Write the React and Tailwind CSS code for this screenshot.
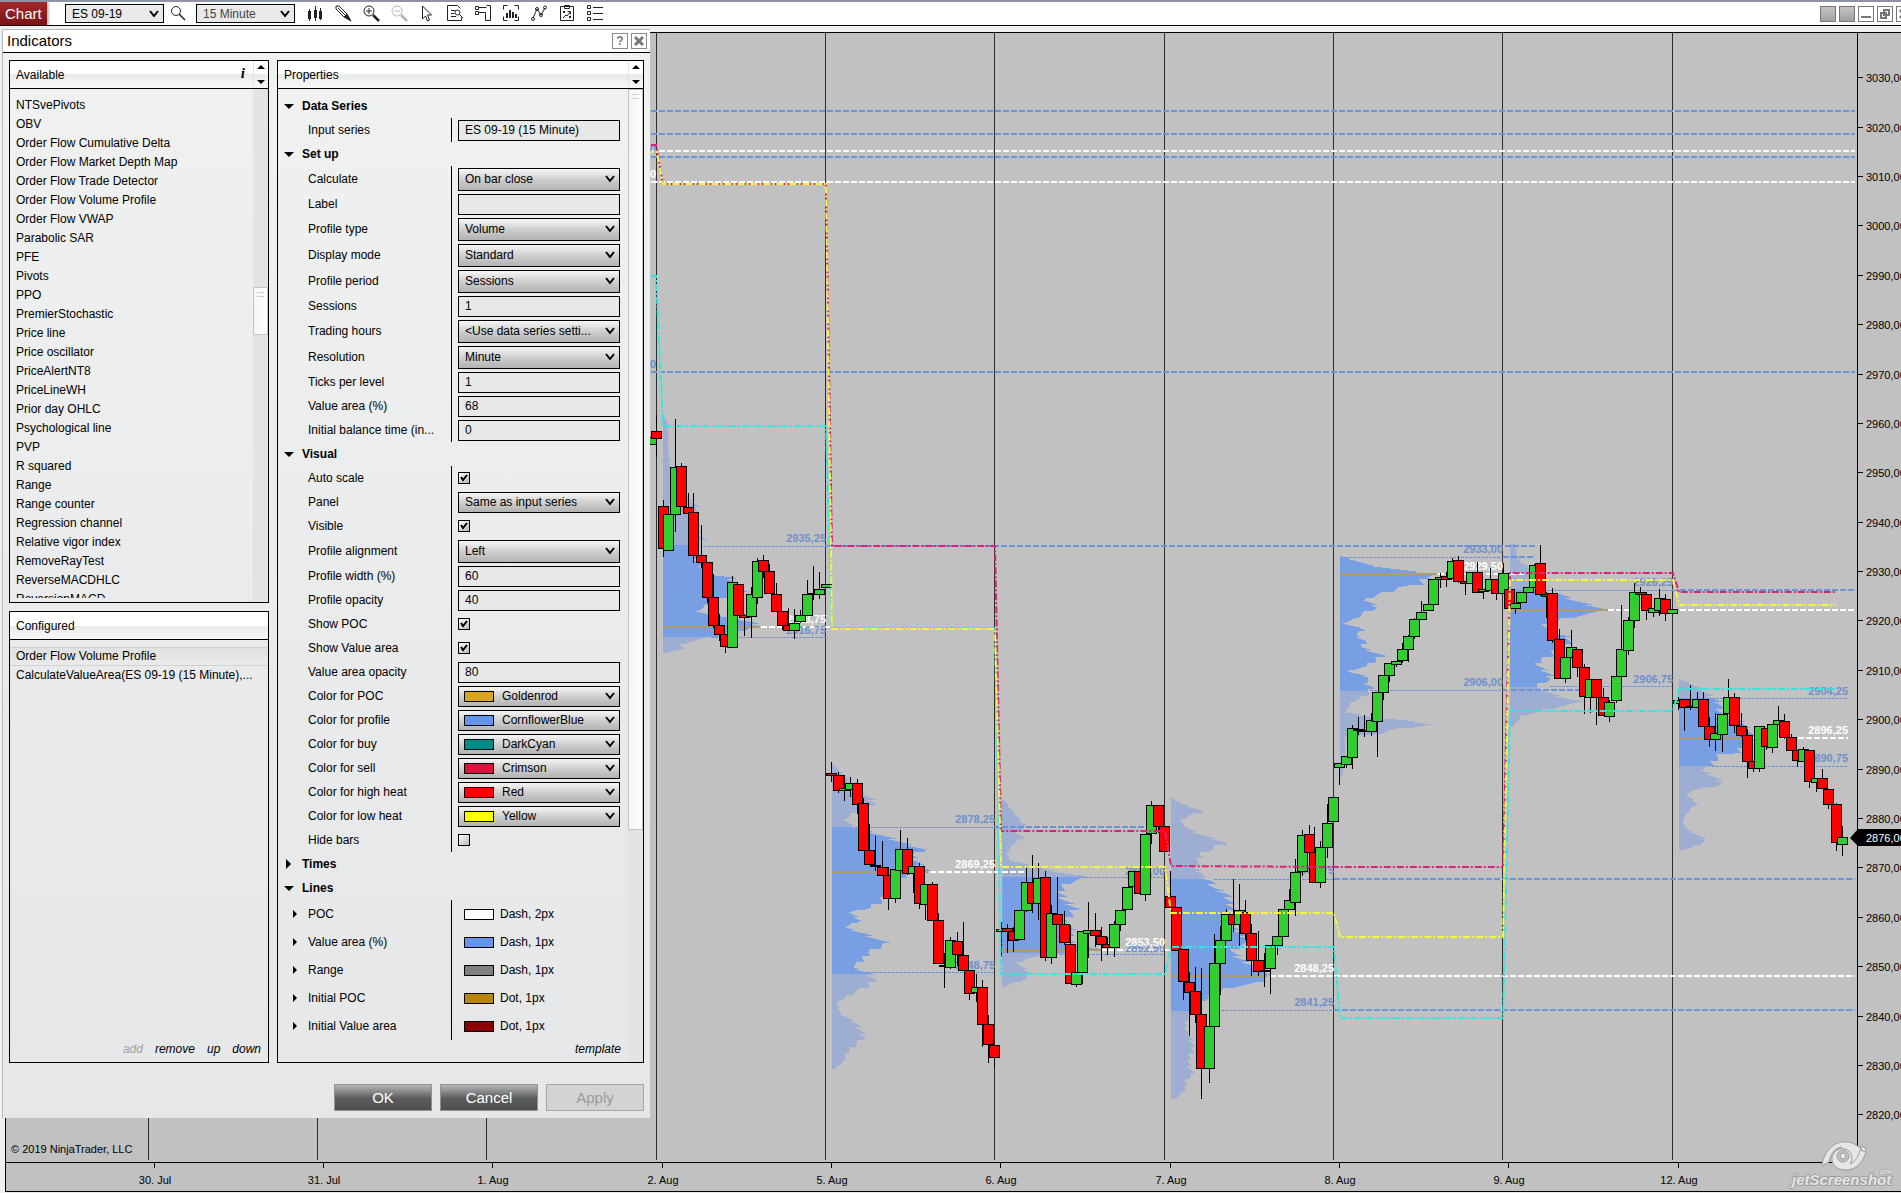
import React from 'react';

const AVAILABLE = [
  'NTSvePivots', 'OBV', 'Order Flow Cumulative Delta', 'Order Flow Market Depth Map',
  'Order Flow Trade Detector', 'Order Flow Volume Profile', 'Order Flow VWAP', 'Parabolic SAR',
  'PFE', 'Pivots', 'PPO', 'PremierStochastic', 'Price line', 'Price oscillator', 'PriceAlertNT8',
  'PriceLineWH', 'Prior day OHLC', 'Psychological line', 'PVP', 'R squared', 'Range',
  'Range counter', 'Regression channel', 'Relative vigor index', 'RemoveRayTest',
  'ReverseMACDHLC', 'ReversionMACD',
];

const GROUPS = [
  {
    title: 'Data Series',
    rows: [{ label: 'Input series', type: 'text', value: 'ES 09-19 (15 Minute)' }],
  },
  {
    title: 'Set up',
    rows: [
      { label: 'Calculate', type: 'select', value: 'On bar close' },
      { label: 'Label', type: 'text', value: '' },
      { label: 'Profile type', type: 'select', value: 'Volume' },
      { label: 'Display mode', type: 'select', value: 'Standard' },
      { label: 'Profile period', type: 'select', value: 'Sessions' },
      { label: 'Sessions', type: 'text', value: '1' },
      { label: 'Trading hours', type: 'select', value: '<Use data series setti...' },
      { label: 'Resolution', type: 'select', value: 'Minute' },
      { label: 'Ticks per level', type: 'text', value: '1' },
      { label: 'Value area (%)', type: 'text', value: '68' },
      { label: 'Initial balance time (in...', type: 'text', value: '0' },
    ],
  },
  {
    title: 'Visual',
    rows: [
      { label: 'Auto scale', type: 'check', value: true },
      { label: 'Panel', type: 'select', value: 'Same as input series', small: true },
      { label: 'Visible', type: 'check', value: true },
      { label: 'Profile alignment', type: 'select', value: 'Left' },
      { label: 'Profile width (%)', type: 'text', value: '60' },
      { label: 'Profile opacity', type: 'text', value: '40' },
      { label: 'Show POC', type: 'check', value: true },
      { label: 'Show Value area', type: 'check', value: true },
      { label: 'Value area opacity', type: 'text', value: '80' },
      { label: 'Color for POC', type: 'select', value: 'Goldenrod', swatch: 'bg-[#daa520]', small: true },
      { label: 'Color for profile', type: 'select', value: 'CornflowerBlue', swatch: 'bg-[#6495ed]', small: true },
      { label: 'Color for buy', type: 'select', value: 'DarkCyan', swatch: 'bg-[#008b8b]', small: true },
      { label: 'Color for sell', type: 'select', value: 'Crimson', swatch: 'bg-[#dc143c]', small: true },
      { label: 'Color for high heat', type: 'select', value: 'Red', swatch: 'bg-[#ff0000]', small: true },
      { label: 'Color for low heat', type: 'select', value: 'Yellow', swatch: 'bg-[#ffff00]', small: true },
      { label: 'Hide bars', type: 'check', value: false },
    ],
  },
  { title: 'Times', closed: true, rows: [] },
  {
    title: 'Lines',
    rows: [
      { label: 'POC', type: 'line', value: 'Dash, 2px', swatch: 'bg-white' },
      { label: 'Value area (%)', type: 'line', value: 'Dash, 1px', swatch: 'bg-[#6495ed]' },
      { label: 'Range', type: 'line', value: 'Dash, 1px', swatch: 'bg-[#808080]' },
      { label: 'Initial POC', type: 'line', value: 'Dot, 1px', swatch: 'bg-[#b8860b]' },
      { label: 'Initial Value area', type: 'line', value: 'Dot, 1px', swatch: 'bg-[#8b0000]' },
    ],
  },
];

// [x, high, body top, body bottom, low, up]
const CANDLES = [
  [651, 437, 437, 444, 444, 1], [656, 415, 431, 438, 457, 0],
  [663, 500, 506, 548, 557, 0], [668, 507, 514, 550, 551, 1], [675, 419, 467, 514, 532, 1],
  [681, 463, 466, 506, 506, 0], [688, 493, 507, 513, 535, 0], [693, 493, 512, 555, 563, 0],
  [701, 525, 555, 562, 568, 0], [707, 562, 562, 597, 603, 0], [713, 574, 597, 625, 628, 0],
  [719, 614, 625, 634, 641, 0], [725, 634, 634, 646, 653, 0], [732, 576, 582, 647, 647, 1],
  [738, 584, 584, 615, 615, 0], [744, 614, 615, 617, 636, 0], [751, 587, 594, 616, 638, 1],
  [757, 558, 561, 597, 604, 1], [763, 555, 560, 571, 578, 0], [769, 564, 571, 593, 593, 0],
  [776, 583, 594, 611, 611, 0], [782, 611, 611, 625, 630, 0], [788, 608, 625, 630, 630, 0],
  [794, 609, 623, 630, 639, 1], [800, 610, 615, 621, 623, 1], [807, 580, 594, 615, 615, 1],
  [813, 566, 593, 594, 600, 1], [819, 572, 589, 594, 599, 1], [826, 584, 584, 587, 587, 1],
  [831, 762, 773, 775, 782, 0], [838, 772, 775, 790, 793, 0], [844, 775, 788, 790, 801, 1],
  [850, 777, 783, 789, 797, 1], [857, 779, 783, 804, 814, 0], [863, 798, 803, 850, 850, 0],
  [869, 824, 850, 864, 864, 0], [875, 836, 865, 866, 871, 0], [882, 841, 867, 875, 875, 0],
  [888, 867, 875, 898, 910, 0], [895, 857, 869, 898, 903, 1], [900, 830, 849, 870, 870, 1],
  [907, 838, 849, 873, 875, 0], [913, 866, 866, 873, 893, 1], [919, 863, 866, 903, 909, 0],
  [925, 884, 884, 904, 920, 1], [932, 882, 884, 920, 920, 0], [938, 913, 920, 963, 963, 0],
  [944, 953, 965, 966, 988, 0], [950, 937, 940, 967, 969, 1], [957, 932, 941, 954, 966, 0],
  [963, 922, 955, 970, 970, 0], [969, 970, 970, 993, 1000, 0], [976, 974, 987, 992, 1002, 1],
  [982, 980, 987, 1024, 1047, 0], [988, 1015, 1024, 1044, 1063, 0], [994, 1045, 1045, 1057, 1068, 0],
  [1001, 922, 929, 931, 957, 1], [1007, 924, 928, 931, 953, 0], [1013, 927, 931, 940, 952, 0],
  [1019, 910, 910, 939, 939, 1], [1026, 868, 882, 910, 912, 1], [1032, 855, 882, 903, 913, 0],
  [1038, 863, 878, 903, 920, 1], [1045, 871, 877, 957, 961, 0], [1051, 905, 913, 957, 964, 1],
  [1057, 877, 914, 924, 924, 0], [1064, 911, 924, 942, 945, 0], [1070, 925, 944, 983, 983, 0],
  [1076, 972, 972, 984, 987, 1], [1082, 931, 931, 972, 984, 1], [1088, 902, 930, 933, 958, 1],
  [1095, 913, 930, 935, 947, 0], [1101, 927, 936, 944, 961, 0], [1107, 937, 944, 947, 955, 0],
  [1114, 921, 924, 947, 957, 1], [1120, 910, 910, 924, 931, 1], [1127, 887, 887, 909, 909, 1],
  [1133, 871, 871, 886, 886, 1], [1139, 871, 871, 893, 893, 0], [1145, 834, 834, 894, 901, 1],
  [1151, 801, 805, 833, 844, 1], [1158, 805, 805, 826, 833, 0], [1164, 826, 826, 851, 851, 0],
  [1170, 871, 896, 907, 907, 0], [1176, 907, 907, 950, 950, 0], [1183, 949, 949, 981, 1000, 0],
  [1189, 972, 982, 992, 1036, 0], [1195, 967, 991, 1014, 1023, 0], [1201, 968, 1014, 1068, 1099, 0],
  [1209, 1018, 1026, 1068, 1083, 1], [1214, 934, 963, 1026, 1035, 1], [1220, 926, 940, 963, 995, 1],
  [1226, 909, 914, 940, 940, 1], [1233, 879, 914, 924, 932, 0], [1239, 884, 910, 924, 947, 1],
  [1245, 900, 912, 933, 940, 0], [1251, 924, 933, 960, 976, 0], [1258, 931, 960, 971, 976, 0],
  [1264, 953, 970, 971, 987, 0], [1270, 945, 945, 968, 994, 1], [1277, 936, 936, 945, 955, 1],
  [1283, 909, 909, 936, 936, 1], [1289, 889, 900, 909, 909, 1], [1295, 859, 872, 902, 916, 1],
  [1302, 830, 835, 871, 876, 1], [1309, 825, 834, 852, 852, 0], [1314, 827, 852, 882, 882, 0],
  [1320, 841, 847, 882, 888, 1], [1327, 804, 823, 847, 858, 1], [1333, 797, 797, 821, 821, 1],
  [1339, 763, 763, 767, 785, 1], [1346, 756, 756, 764, 768, 1], [1352, 725, 728, 757, 769, 1],
  [1358, 717, 729, 730, 735, 1], [1364, 715, 730, 731, 737, 1], [1371, 713, 720, 731, 736, 1],
  [1377, 692, 692, 721, 757, 1], [1383, 675, 675, 692, 700, 1], [1389, 663, 663, 675, 682, 1],
  [1396, 661, 661, 664, 667, 1], [1402, 643, 649, 660, 663, 1], [1408, 635, 636, 649, 662, 1],
  [1414, 618, 619, 636, 639, 1], [1421, 601, 612, 619, 620, 1], [1428, 595, 604, 610, 611, 1],
  [1433, 579, 579, 604, 604, 1], [1440, 573, 577, 579, 588, 1], [1446, 572, 576, 579, 587, 0],
  [1452, 558, 561, 578, 578, 1], [1458, 556, 560, 581, 583, 0], [1465, 581, 581, 583, 595, 0],
  [1471, 572, 572, 583, 583, 1], [1477, 562, 572, 592, 592, 0], [1483, 589, 589, 591, 599, 1],
  [1490, 568, 579, 590, 590, 1], [1496, 579, 579, 593, 600, 0], [1503, 563, 573, 593, 593, 1],
  [1509, 589, 589, 608, 608, 0], [1515, 603, 603, 608, 614, 1], [1521, 592, 592, 602, 602, 1],
  [1528, 587, 587, 592, 592, 1], [1534, 564, 565, 587, 587, 1], [1540, 545, 563, 594, 596, 0],
  [1546, 592, 594, 596, 618, 0], [1552, 588, 593, 640, 643, 0], [1559, 629, 639, 678, 678, 0],
  [1565, 657, 657, 678, 683, 1], [1571, 630, 647, 657, 657, 1], [1577, 649, 649, 667, 677, 0],
  [1584, 664, 667, 696, 714, 0], [1590, 679, 679, 697, 713, 1], [1596, 679, 679, 697, 725, 0],
  [1603, 688, 697, 715, 715, 0], [1609, 700, 702, 716, 722, 1], [1616, 676, 676, 700, 703, 1],
  [1621, 605, 649, 676, 679, 1], [1628, 617, 620, 650, 655, 1], [1634, 583, 592, 620, 628, 1],
  [1640, 587, 592, 594, 594, 0], [1646, 592, 594, 610, 620, 0], [1653, 608, 608, 612, 617, 1],
  [1659, 589, 598, 610, 616, 1], [1665, 594, 599, 613, 621, 0], [1672, 609, 609, 613, 613, 1],
  [1678, 697, 700, 703, 710, 1], [1684, 699, 699, 707, 731, 0], [1690, 685, 706, 707, 710, 0],
  [1697, 692, 699, 707, 707, 1], [1703, 692, 699, 726, 726, 0], [1709, 717, 726, 739, 747, 0],
  [1715, 713, 733, 739, 751, 1], [1722, 714, 714, 734, 752, 1], [1728, 679, 697, 713, 713, 1],
  [1734, 693, 697, 725, 733, 0], [1741, 713, 726, 735, 737, 0], [1747, 729, 735, 761, 778, 0],
  [1753, 761, 761, 768, 772, 0], [1759, 726, 726, 768, 772, 1], [1766, 728, 728, 746, 750, 0],
  [1772, 724, 724, 747, 753, 1], [1778, 706, 720, 724, 724, 1], [1784, 714, 721, 737, 739, 0],
  [1791, 734, 737, 750, 750, 0], [1797, 750, 750, 760, 767, 0], [1803, 747, 749, 761, 761, 1],
  [1809, 750, 750, 781, 788, 0], [1816, 778, 778, 782, 792, 1], [1822, 769, 778, 788, 788, 0],
  [1828, 789, 789, 804, 809, 0], [1836, 803, 804, 842, 851, 0], [1842, 826, 837, 844, 856, 1],
];

// volume by price: outline points are [y, width]
const PROFILES = [
  {
    x: 663, va: [545, 637], poc: [627, 760],
    pts: [[417, 2], [424, 5], [447, 5], [466, 7], [490, 18], [501, 28], [507, 36], [516, 30], [539, 39], [545, 32], [558, 32], [574, 45], [577, 67], [589, 78], [595, 80], [598, 60], [604, 48], [610, 33], [616, 55], [621, 85], [625, 97], [631, 72], [637, 47], [641, 28], [644, 18], [648, 20], [653, 3]],
  },
  {
    x: 832, va: [827, 974], poc: [872, 928],
    pts: [[764, 1], [773, 10], [787, 22], [797, 37], [803, 43], [811, 22], [820, 13], [827, 22], [835, 50], [842, 70], [849, 92], [855, 80], [863, 86], [871, 96], [875, 72], [883, 64], [893, 55], [900, 50], [907, 38], [912, 18], [920, 28], [927, 13], [933, 32], [943, 55], [952, 36], [960, 30], [967, 20], [973, 38], [978, 42], [985, 37], [993, 20], [1002, 5], [1013, 8], [1023, 25], [1037, 32], [1047, 20], [1053, 14], [1060, 12], [1069, 2]],
  },
  {
    x: 1002, va: [877, 953], poc: [950, 1101],
    pts: [[800, 2], [807, 8], [813, 12], [818, 17], [827, 23], [832, 14], [837, 20], [845, 10], [853, 5], [860, 8], [868, 40], [872, 58], [875, 78], [878, 82], [883, 65], [890, 58], [900, 62], [908, 74], [913, 70], [923, 60], [930, 70], [940, 66], [945, 72], [949, 98], [953, 60], [958, 25], [963, 15], [968, 22], [973, 28], [978, 25], [983, 10], [987, 2]],
  },
  {
    x: 1171, va: [879, 1011], poc: [976, 1267],
    pts: [[797, 0], [802, 8], [807, 22], [811, 31], [815, 18], [820, 10], [825, 12], [832, 25], [837, 38], [842, 55], [847, 44], [853, 30], [860, 28], [867, 22], [873, 32], [877, 30], [880, 40], [888, 42], [893, 56], [907, 60], [927, 60], [937, 75], [942, 80], [947, 65], [953, 62], [960, 72], [967, 85], [973, 93], [976, 97], [982, 88], [987, 60], [990, 52], [1000, 32], [1007, 25], [1011, 22], [1020, 15], [1030, 15], [1037, 20], [1050, 22], [1057, 18], [1067, 18], [1073, 22], [1080, 15], [1090, 14], [1095, 8], [1099, 3]],
  },
  {
    x: 1340, va: [556, 691], poc: [574, 1436],
    pts: [[556, 2], [560, 15], [565, 30], [570, 65], [574, 95], [577, 85], [584, 80], [587, 60], [590, 52], [595, 35], [600, 25], [607, 38], [612, 25], [618, 15], [623, 3], [627, 20], [630, 22], [635, 15], [640, 25], [647, 22], [655, 42], [660, 35], [665, 28], [671, 8], [677, 30], [682, 25], [687, 32], [693, 28], [697, 22], [702, 12], [707, 8], [712, 6], [717, 35], [720, 65], [724, 92], [727, 70], [730, 50], [733, 40], [737, 5], [760, 5], [778, 1]],
  },
  {
    x: 1510, va: [590, 687], poc: [610, 1608],
    pts: [[544, 5], [550, 6], [557, 8], [563, 12], [566, 18], [572, 25], [583, 24], [590, 22], [593, 50], [597, 57], [602, 70], [607, 88], [610, 98], [613, 80], [617, 60], [622, 38], [626, 35], [632, 42], [637, 60], [643, 58], [648, 48], [655, 40], [660, 30], [665, 28], [673, 38], [678, 42], [683, 30], [687, 25], [692, 38], [695, 45], [700, 65], [702, 72], [704, 60], [708, 40], [712, 25], [715, 12], [720, 8], [727, 2]],
  },
  {
    x: 1679, va: [698, 766], poc: [738, 1741],
    pts: [[679, 2], [687, 20], [693, 28], [698, 34], [703, 42], [717, 40], [722, 65], [730, 68], [738, 72], [742, 75], [748, 62], [752, 60], [754, 42], [760, 35], [766, 33], [770, 22], [775, 33], [782, 45], [787, 30], [790, 12], [795, 8], [803, 18], [810, 10], [817, 5], [823, 4], [830, 10], [835, 20], [840, 27], [845, 18], [850, 3]],
  },
];

// [x1, x2, y]
const BLUE_DASH = [
  [651, 1855, 111], [651, 1855, 134], [651, 1855, 157], [651, 1855, 372], [825, 1535, 546],
  [994, 1145, 827], [1334, 1855, 879], [1334, 1855, 1010], [1503, 1535, 557], [1503, 1580, 690],
  [1672, 1855, 590],
];
const WHITE_DASH = [
  [651, 1855, 151], [651, 1855, 182], [761, 830, 627], [930, 1025, 872], [1101, 1172, 950],
  [1270, 1855, 976], [1438, 1524, 574], [1608, 1855, 610], [1750, 1848, 738],
];
const BLUE_DOT = [
  [700, 828, 546], [711, 828, 637], [855, 994, 827], [868, 994, 972], [1085, 1164, 877],
  [1060, 1164, 954], [1214, 1334, 879], [1221, 1334, 1010], [1345, 1503, 557], [1370, 1503, 690],
  [1530, 1672, 590], [1550, 1672, 686], [1712, 1848, 698], [1712, 1848, 766],
];

// [right edge, baseline, text]
const BLUE_LABELS = [
  [656, 153, '0'], [656, 368, '0'], [826, 542, '2935,25'], [826, 634, '2916,75'],
  [995, 823, '2878,25'], [995, 969, '2848,75'], [1165, 875, '2866,00'], [1165, 952, '2852,50'],
  [1334, 874, '2867,75'], [1334, 1006, '2841,25'], [1503, 553, '2933,00'], [1503, 686, '2906,00'],
  [1673, 586, '2926,25'], [1673, 683, '2906,75'], [1848, 695, '2904,25'], [1848, 762, '2890,75'],
];
const WHITE_LABELS = [
  [656, 178, '0'], [826, 623, '2918,75'], [995, 868, '2869,25'], [1165, 946, '2853,50'],
  [1334, 972, '2848,25'], [1503, 570, '2929,50'], [1848, 734, '2896,25'],
];

const MAGENTA = '651,145 656,145 663,184 826,184 832,546 995,546 1001,831 1165,831 1171,866 1334,867 1503,867 1510,573 1673,573 1679,592 1835,592';
const YELLOW = '651,152 657,152 663,184 826,184 832,629 995,629 1001,867 1165,867 1171,913 1334,913 1340,937 1503,937 1510,580 1673,580 1679,605 1836,605';
const CYAN = '651,276 656,276 663,426 826,426 832,628 995,628 1001,974 1165,974 1171,947 1334,947 1340,1018 1503,1018 1510,711 1673,711 1679,689 1835,689';

const DAYS = [
  [148, '30. Jul'], [317, '31. Jul'], [486, '1. Aug'], [656, '2. Aug'], [825, '5. Aug'],
  [994, '6. Aug'], [1164, '7. Aug'], [1333, '8. Aug'], [1502, '9. Aug'], [1672, '12. Aug'],
];

const PRICES = Array.from({ length: 22 }, (_, i) => 3030 - i * 10);
const priceY = (p) => Math.round(77.3 + (3030 - p) * 4.938);

function widthAt(pts, y) {
  for (let i = 1; i < pts.length; i++) {
    const [y0, w0] = pts[i - 1];
    const [y1, w1] = pts[i];
    if (y <= y1) return w0 + ((w1 - w0) * (y - y0)) / (y1 - y0);
  }
  return 0;
}

// one bar per price level, with a bit of unevenness between neighbours
function profilePath({ x, va, pts }, inside) {
  let d = '';
  const last = pts[pts.length - 1][0];
  for (let y = pts[0][0]; y < last; y++) {
    if ((y >= va[0] && y < va[1]) !== inside) continue;
    const w = widthAt(pts, y);
    const noise = (((y * 7919) % 13) - 6) / 6;
    d += `M${x} ${y}h${Math.max(1, Math.round(w + noise * Math.min(5, w * 0.12)))}v1H${x}z`;
  }
  return d;
}

function Profile({ data }) {
  return (
    <g shapeRendering="crispEdges">
      <path d={profilePath(data, false)} fill="#9eaed3" />
      <path d={profilePath(data, true)} fill="#789fe3" />
      <line x1={data.x} x2={data.poc[1]} y1={data.poc[0]} y2={data.poc[0]} stroke="#b39c62" strokeWidth="2" />
    </g>
  );
}

function Candle({ data }) {
  const [x, high, top, bottom, low, up] = data;
  return (
    <g stroke="#000" shapeRendering="crispEdges">
      <line x1={x + 0.5} x2={x + 0.5} y1={high} y2={low} />
      <rect x={x - 4.5} y={top + 0.5} width="10" height={Math.max(1, bottom - top)} fill={up ? '#32cd32' : '#ff0000'} />
    </g>
  );
}

function HLines({ lines, ...rest }) {
  return (
    <g {...rest}>
      {lines.map(([x1, x2, y]) => (
        <line key={`${x1}-${y}`} x1={x1} x2={x2} y1={y} y2={y} />
      ))}
    </g>
  );
}

function Watermark() {
  return (
    <g fill="#e6e6e6" stroke="#9d9d9d">
      <path d="M1822 1166c2-15 12-25 24-24 7 0 12 4 16 8l-2-4 6 2c-2 14-10 22-20 22-9 0-14-6-13-13 1-6 5-9 9-10-8 1-12 8-13 15z" />
      <path d="M1832 1157c2-6 7-10 13-8 7 1 9 10 5 15 5-2 9-8 10-14l6 2c-4 13-12 18-20 18-9 0-15-5-14-13z" />
      <circle cx="1843" cy="1156" r="6" fill="#c1c1c1" />
      <circle cx="1843" cy="1156" r="3" />
      <text x="1792" y="1185" fontSize="15" fontStyle="italic" fontWeight="bold" strokeWidth="2" paintOrder="stroke">
        jetScreenshot
      </text>
      <text x="1873" y="1174" fontSize="8" fontWeight="bold" paintOrder="stroke">.com</text>
    </g>
  );
}

function Chart() {
  return (
    <svg
      viewBox="5 32 1896 1161"
      preserveAspectRatio="xMinYMin slice"
      className="h-full w-full bg-[#c1c1c1] font-['Liberation_Sans',Arial,sans-serif] text-[11px]"
      role="img"
      aria-label="ES 09-19, 15 Minute chart"
    >
      <g stroke="#2d2d2d" shapeRendering="crispEdges">
        {DAYS.map(([x]) => <line key={x} x1={x + 0.5} x2={x + 0.5} y1="33" y2="1160" />)}
      </g>

      {PROFILES.map((p) => <Profile key={p.x} data={p} />)}

      <HLines lines={BLUE_DOT} stroke="#6c90d2" strokeDasharray="3 1" transform="translate(0 .5)" />
      <HLines lines={BLUE_DASH} stroke="#6c93d8" strokeWidth="2" strokeDasharray="6 2" />
      <HLines lines={WHITE_DASH} stroke="#fff" strokeWidth="2" strokeDasharray="6 2" />

      <g textAnchor="end" fontWeight="bold">
        {BLUE_LABELS.map(([x, y, t]) => <text key={`${x}-${y}`} x={x} y={y} fill="#6f8fcc">{t}</text>)}
        {WHITE_LABELS.map(([x, y, t]) => <text key={`${x}-${y}`} x={x} y={y} fill="#fff">{t}</text>)}
      </g>

      {CANDLES.map((c) => <Candle key={c[0]} data={c} />)}

      <g fill="none" strokeWidth="2">
        <polyline points={CYAN} stroke="#2fe6e0" strokeDasharray="7 2 2 2" />
        <polyline points={MAGENTA} stroke="#d8247c" strokeDasharray="7 2 2 2" />
        <polyline points={YELLOW} stroke="#f6f63c" strokeDasharray="7 2 2 2" strokeDashoffset="4" />
      </g>

      <g stroke="#000" shapeRendering="crispEdges">
        <path d="M5 32.5H1901M5.5 32V1191M5 1162.5H1857.5V32M5 1191.5H1901" fill="none" />
        {DAYS.map(([x]) => <line key={x} x1={x + 6.5} x2={x + 6.5} y1="1163" y2="1168" />)}
        {PRICES.map((p) => <line key={p} x1="1858" x2="1863" y1={priceY(p) + 0.5} y2={priceY(p) + 0.5} />)}
      </g>
      <rect x="5" y="1192" width="1896" height="1" fill="#e9ebeb" />

      {DAYS.map(([x, t]) => <text key={x} x={x + 7} y="1184" textAnchor="middle">{t}</text>)}
      {PRICES.map((p) => <text key={p} x="1866" y={priceY(p) + 5}>{p},00</text>)}
      <text x="11" y="1153">© 2019 NinjaTrader, LLC</text>

      <path d="M1850 838l8-9H1901v17H1858z" fill="#000" />
      <text x="1866" y="842" fill="#fff">2876,00</text>
      <Watermark />
    </svg>
  );
}

function Chevron() {
  return (
    <svg viewBox="0 0 10 8" className="pointer-events-none absolute right-1 top-1/2 h-2 w-2.5 -translate-y-1/2" fill="none" stroke="#000" strokeWidth="2">
      <path d="M1 1l4 5 4-5" />
    </svg>
  );
}

function ToolbarSelect({ label, value, className }) {
  return (
    <div className={`relative h-[19px] w-[99px] shrink-0 border border-black bg-[#e8e9e9] ${className}`}>
      <select aria-label={label} className="block h-full w-full appearance-none bg-transparent pl-1.5 leading-4 outline-none">
        <option>{value}</option>
      </select>
      <Chevron />
    </div>
  );
}

const ICONS = [
  ['Chart style', <g fill="currentColor" stroke="none"><path d="M1 6h3v8H1zM7 5h3v8H7zM12 6h3v8h-3z" /><path d="M2 4h1v12H2zM8 1h1v15H8zM13 3h1v12h-1z" /></g>],
  ['Drawing tools', <g><path d="M1 1h3l8 8-3 3-8-8z" /><path d="M3 3l7 7M5 2l7 7" /><path d="M9 12l3-3 4 7z" fill="currentColor" /></g>],
  ['Zoom in', <g><circle cx="6" cy="6" r="5" /><path d="M6 3v6M3 6h6" /><path d="M10 10l6 6" strokeWidth="2.5" /></g>],
  ['Zoom out', <g stroke="#b5b5b5"><circle cx="6" cy="6" r="5" /><path d="M3 6h6" /><path d="M10 10l6 6" strokeWidth="2.5" /></g>],
  ['Cursor', <path d="M3.5 1v13l3-3 2 5 2-1-2-5h4z" />],
  ['Data box', <g><path d="M14.500 12.500v3H.5V.5h10l3 3" /><path d="M4 5.500h4M4 8.500h3M4 11.500h5" /><circle cx="10.500" cy="7.500" r="2.500" /><path d="M12.500 9.500l3.500 3.500" /></g>],
  ['Chart trader', <g><path d="M11.500.5h4v15h-5v-8M.5 1.500h3v3h-3zM.5 6.500h3v3h-3zM3.500 2.500h8M3.500 7.500h7" /></g>],
  ['Data series', <g><path d="M.5 4.500v-4h4M11.500.5h4v4M15.500 11.500v4h-4M4.500 15.500h-4v-4" /><path d="M4 8v5M7 5v8M10 7v6M13 9v4" strokeWidth="2" /></g>],
  ['Indicators', <g><path d="M2 13L6 4l4 6 4-7" /><circle cx="2" cy="14" r="1.5" /><circle cx="6" cy="4" r="1.5" /><circle cx="10" cy="10" r="1.5" /><circle cx="14" cy="2.500" r="1.5" /></g>],
  ['Strategies', <g><path d="M1.500 1.500h13v14h-13zM5.500.5h5v3h-5z" /><path d="M4 6l2 2M6 6L4 8M10 11l2 2M12 11l-2 2M4 13l3-3 1 1 3-4M8.500 6.500h3v3" /></g>],
  ['Properties', <g><path d="M.5.5h3v3h-3zM.5 6.500h3v3h-3zM.5 12.500h3v3h-3zM6 2.500h10M6 8.500h10M6 14.500h10" /></g>],
];

function Toolbar() {
  return (
    <header className="flex h-[26px] shrink-0 items-start overflow-hidden border-b border-t-2 border-b-black border-t-[#8c93a6] bg-white">
      <div className="flex h-full w-[47px] shrink-0 items-center bg-linear-to-b from-[#a3262c] to-[#7c1418] pl-[5px] text-[15px] text-white shadow-[2px_0_2px_#bbb]">
        Chart
      </div>
      <ToolbarSelect label="Instrument" value="ES 09-19" className="ml-[18px] mt-0.5" />
      <button type="button" aria-label="Search" className="ml-1.5 mt-[3px] shrink-0">
        <svg viewBox="0 0 16 16" className="h-4 w-4" fill="none" stroke="#222">
          <circle cx="6" cy="6" r="4.5" />
          <path d="M9 9l6 6" strokeWidth="1.5" />
        </svg>
      </button>
      <ToolbarSelect label="Interval" value="15 Minute" className="ml-2.5 mt-0.5 text-[#444]" />
      <div className="ml-3 mt-[3px] flex gap-[11px]">
        {ICONS.map(([name, icon]) => (
          <button key={name} type="button" aria-label={name} className="shrink-0 text-[#222]">
            <svg viewBox="0 0 17 17" className="h-[17px] w-[17px]" fill="none" stroke="currentColor">{icon}</svg>
          </button>
        ))}
      </div>
      <div className="-mr-[11px] ml-auto mt-1 flex shrink-0 gap-[3px] text-[#777]">
        <button type="button" aria-label="Link instrument" className="h-4 w-4 border border-[#777] bg-linear-to-b from-[#c4c2c2] to-[#a3a0a0]" />
        <button type="button" aria-label="Link interval" className="h-4 w-4 border border-[#777] bg-linear-to-b from-[#c4c2c2] to-[#a3a0a0]" />
        <button type="button" aria-label="Minimize" className="h-4 w-4 border border-current">
          <svg viewBox="0 0 14 14" className="h-full w-full" stroke="currentColor" strokeWidth="2"><path d="M2 10h10" /></svg>
        </button>
        <button type="button" aria-label="Restore" className="h-4 w-4 border border-current">
          <svg viewBox="0 0 14 14" className="h-full w-full" fill="none" stroke="currentColor" strokeWidth="2"><path d="M6 3h5v5H6zM3 6h5v5H3z" /></svg>
        </button>
        <button type="button" aria-label="Close" className="h-4 w-4 border border-current">
          <svg viewBox="0 0 14 14" className="h-full w-full" stroke="currentColor" strokeWidth="3"><path d="M3 3l8 8M11 3l-8 8" /></svg>
        </button>
      </div>
    </header>
  );
}

function Spinner() {
  return (
    <div className="flex h-full w-[15px] flex-col items-center justify-between border-l border-[#e3e3e3] py-1">
      <svg viewBox="0 0 8 4" className="h-1 w-2"><path d="M0 4l4-4 4 4z" /></svg>
      <svg viewBox="0 0 8 4" className="h-1 w-2"><path d="M0 0l4 4 4-4z" /></svg>
    </div>
  );
}

function PanelHeader({ title, children }) {
  return (
    <div className="flex h-[28px] shrink-0 items-center border-b border-black bg-linear-to-b from-white from-50% via-[#e9eaea] via-50% to-[#f8f8f8] pl-1.5">
      <h2 className="flex-1">{title}</h2>
      {children}
    </div>
  );
}

function Grip({ className }) {
  return (
    <div className={`w-full border border-[#c3c4c4] bg-linear-to-r from-[#f4f4f4] to-white px-[3px] pt-1 ${className}`}>
      <div className="h-[5px] border-y border-[#cfcfcf]" />
    </div>
  );
}

const FIELD = 'ml-1.5 w-[162px] border border-black';

function Field({ row, id }) {
  if (row.type === 'check') {
    return (
      <span className="relative ml-1.5 block h-3 w-3">
        <input id={id} type="checkbox" defaultChecked={row.value} className="peer block h-3 w-3 appearance-none border border-black bg-linear-to-br from-white to-[#b8b8b8]" />
        <svg viewBox="0 0 12 12" className="pointer-events-none absolute inset-0 hidden peer-checked:block" fill="none" stroke="#000" strokeWidth="2">
          <path d="M3 5l2 3 4-5" />
        </svg>
      </span>
    );
  }
  if (row.type === 'text') {
    return <input id={id} type="text" defaultValue={row.value} className={`${FIELD} h-[21px] bg-[#e7e9e9] px-1.5 outline-none`} />;
  }
  if (row.type === 'line') {
    return (
      <span className="ml-3 flex items-center gap-1.5">
        <span className={`h-[11px] w-[30px] border border-black ${row.swatch}`} />
        {row.value}
      </span>
    );
  }
  return (
    <div className={`${FIELD} relative flex items-center bg-linear-to-b from-[#f6f6f6] via-[#cfcfcf] via-50% to-[#b2b2b2] ${row.small ? 'h-[21px]' : 'h-[23px]'}`}>
      {row.swatch && <span className={`ml-[5px] mr-0.5 h-[11px] w-[30px] shrink-0 border border-black ${row.swatch}`} />}
      <select id={id} className="h-full min-w-0 flex-1 appearance-none bg-transparent pl-1.5 leading-4 outline-none">
        <option>{row.value}</option>
      </select>
      <Chevron />
    </div>
  );
}

function PropertyRow({ row, id }) {
  let height = 'h-6';
  if (row.type === 'select' && !row.small) height = 'h-[26px]';
  if (row.type === 'line') height = 'h-7';
  return (
    <div className={`flex items-center ${height}`}>
      <label htmlFor={row.type === 'line' ? undefined : id} className="flex h-full w-[174px] items-center border-r border-black pl-[13px]">
        <span className="w-[17px]">
          {row.type === 'line' && <svg viewBox="0 0 4 8" className="ml-0.5 h-2 w-1"><path d="M0 0l4 4-4 4z" /></svg>}
        </span>
        {row.label}
      </label>
      <Field row={row} id={id} />
    </div>
  );
}

function Group({ group }) {
  return (
    <section>
      <h3 className="flex h-6 items-center pl-1.5 font-bold">
        <button type="button" className="flex items-center">
          <span className="w-[18px]">
            {group.closed
              ? <svg viewBox="0 0 5 10" className="ml-0.5 h-2.5 w-[5px]"><path d="M0 0l5 5-5 5z" /></svg>
              : <svg viewBox="0 0 10 5" className="h-[5px] w-2.5"><path d="M0 0h10l-5 5z" /></svg>}
          </span>
          {group.title}
        </button>
      </h3>
      {group.rows.map((row, i) => (
        <PropertyRow key={row.label} row={row} id={`${group.title.replace(' ', '-')}-${i}`} />
      ))}
    </section>
  );
}

function IndicatorsDialog() {
  return (
    <div role="dialog" aria-label="Indicators" className="absolute left-0.5 top-[3px] flex w-[648px] flex-col border-l border-t border-[#b9bbbb] bg-linear-to-b from-[#f0f2f1] via-[#e9eaec] via-60% to-[#e5e7e9]">
      <div className="flex h-[23px] items-center border-b border-black bg-white pl-1 pr-[3px]">
        <h1 className="flex-1 text-[15px]">Indicators</h1>
        <button type="button" aria-label="Help" className="mr-[3px] h-4 w-4 border border-[#8a8a8a] text-center font-bold leading-[14px] text-[#777]">?</button>
        <button type="button" aria-label="Close" className="h-4 w-4 border border-[#8a8a8a] text-[#777]">
          <svg viewBox="0 0 14 14" className="h-full w-full" stroke="currentColor" strokeWidth="3"><path d="M3 3l8 8M11 3l-8 8" /></svg>
        </button>
      </div>

      <div className="flex gap-2 px-1.5 pt-[7px]">
        <div className="flex w-[260px] flex-col gap-2">
          <div className="flex h-[543px] flex-col border border-black">
            <PanelHeader title="Available">
              <button type="button" aria-label="Info" className="mr-2 pb-1 font-['Liberation_Serif',serif] text-[15px] font-bold italic leading-4">i</button>
              <Spinner />
            </PanelHeader>
            <div className="flex min-h-0 flex-1">
              <ul className="mb-1 flex-1 overflow-hidden pl-1.5 pt-[7px]">
                {AVAILABLE.map((name) => <li key={name} className="h-[19px] leading-[19px]">{name}</li>)}
              </ul>
              <div className="w-[15px] bg-[#e2e3e4] pt-[198px]">
                <Grip className="h-12" />
              </div>
            </div>
          </div>

          <div className="flex flex-1 flex-col border border-black">
            <PanelHeader title="Configured" />
            <ul className="mt-[7px] flex-1">
              <li className="h-[19px] border-y border-[#cfd1d1] bg-linear-to-b from-[#dfe0e0] to-[#ebebeb] pl-1.5 leading-[17px]">Order Flow Volume Profile</li>
              <li className="h-[19px] pl-1.5 leading-[19px]">CalculateValueArea(ES 09-19 (15 Minute),...</li>
            </ul>
            <div className="flex justify-end gap-3 pb-[5px] pr-[7px]">
              <button type="button" disabled className="italic text-[#a0a0a0]">add</button>
              <button type="button" className="italic">remove</button>
              <button type="button" className="italic">up</button>
              <button type="button" className="italic">down</button>
            </div>
          </div>
        </div>

        <div className="flex flex-1 flex-col border border-black">
          <PanelHeader title="Properties">
            <Spinner />
          </PanelHeader>
          <div className="flex flex-1">
            <div className="flex flex-1 flex-col pt-[5px]">
              {GROUPS.map((g) => <Group key={g.title} group={g} />)}
              <button type="button" className="mr-[7px] self-end pb-[5px] pt-px italic">template</button>
            </div>
            <div className="w-[15px] bg-[#e2e3e4]">
              <Grip className="h-[741px]" />
            </div>
          </div>
        </div>
      </div>

      <div className="flex justify-end gap-2 pb-[7px] pr-1.5 pt-[21px] text-[15px]">
        <button type="button" className="h-[27px] w-[98px] border border-[#909294] bg-linear-to-b from-[#b5b6b8] via-[#5a5b5d] via-55% to-[#4f5052] text-white">OK</button>
        <button type="button" className="h-[27px] w-[98px] border border-[#909294] bg-linear-to-b from-[#b5b6b8] via-[#5a5b5d] via-55% to-[#4f5052] text-white">Cancel</button>
        <button type="button" disabled className="h-[27px] w-[98px] border border-[#a5a5a5] bg-[#d2d3d3] text-[#9a9a9a]">Apply</button>
      </div>
    </div>
  );
}

export default function App() {
  return (
    <div className="flex h-screen flex-col overflow-hidden bg-[#eff1f0] font-['Liberation_Sans',Arial,sans-serif] text-[12px] leading-4 text-black">
      <Toolbar />
      <main className="relative min-h-0 flex-1 pl-[5px] pt-1.5">
        <Chart />
        <IndicatorsDialog />
      </main>
    </div>
  );
}
